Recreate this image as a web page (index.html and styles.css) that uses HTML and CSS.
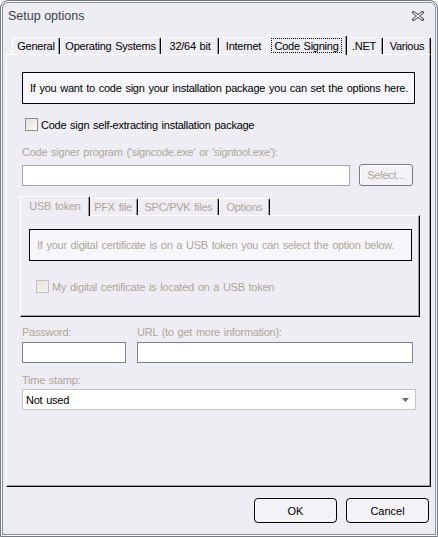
FILE: index.html
```html
<!DOCTYPE html>
<html>
<head>
<meta charset="utf-8">
<link rel="stylesheet" href="styles.css">
</head>
<body>
<div class="window">
  <div class="titlebar">
    <span class="title">Setup options</span>
    <svg class="close" width="12" height="10" viewBox="0 0 12 10">
      <path d="M1.5 1.5 L10.5 8.5 M10.5 1.5 L1.5 8.5" stroke="#5a5d63" stroke-width="3.2" stroke-linecap="square" fill="none"/>
      <path d="M1.5 1.5 L10.5 8.5 M10.5 1.5 L1.5 8.5" stroke="#eeedf3" stroke-width="1.1" stroke-linecap="butt" fill="none"/>
    </svg>
  </div>
  <div class="tabs">
    <div class="tab w-general">General</div>
    <div class="tab w-os">Operating Systems</div>
    <div class="tab w-bit">32/64 bit</div>
    <div class="tab w-internet">Internet</div>
    <div class="tab selected w-code"><span class="focus">Code Signing</span></div>
    <div class="tab w-net">.NET</div>
    <div class="tab w-various">Various</div>
  </div>
  <div class="panel">
    <div class="info">If you want to code sign your installation package you can set the options here.</div>
    <div class="check main-check"><span class="box"></span><span>Code sign self-extracting installation package</span></div>
    <div class="label dis signer-label">Code signer program ('signcode.exe' or 'signtool.exe'):</div>
    <div class="signer-row">
      <div class="input light signer-input"></div>
      <div class="btn select-btn dis">Select...</div>
    </div>
    <div class="subtabs">
      <div class="tab stab selected w-usb">USB token</div>
      <div class="tab stab w-pfx">PFX file</div>
      <div class="tab stab w-spc">SPC/PVK files</div>
      <div class="tab stab w-opt">Options</div>
    </div>
    <div class="subpanel">
      <div class="info sub-info dis">If your digital certificate is on a USB token you can select the option below.</div>
      <div class="check sub-check dis"><span class="box disbox"></span><span>My digital certificate is located on a USB token</span></div>
    </div>
    <div class="pair labels dis">
      <div>Password:</div>
      <div>URL (to get more information):</div>
    </div>
    <div class="pair inputs">
      <div class="input dark"></div>
      <div class="input dark"></div>
    </div>
    <div class="label dis ts-label">Time stamp:</div>
    <div class="dropdown">
      <span>Not used</span>
      <svg class="arrow" width="7" height="4" viewBox="0 0 7 4"><path d="M0 0 H7 L3.5 4 Z" fill="#6b6b6b"/></svg>
    </div>
  </div>
  <div class="buttons">
    <div class="btn big">OK</div>
    <div class="btn big">Cancel</div>
  </div>
</div>
</body>
</html>
```

FILE: styles.css
```css
* { box-sizing: border-box; }

body {
  margin: 0;
  background: #ffffff;
  font-family: "Liberation Sans", Arial, sans-serif;
  font-size: 11px;
  letter-spacing: -0.25px;
  word-spacing: 1px;
  color: #000;
}

.window {
  width: 438px;
  height: 537px;
  background: #eeedf3;
  border: 1px solid #737b84;
  border-radius: 8px 8px 0 0;
  box-shadow: inset 0 0 0 1px #fbfbfd, inset 0 0 0 2px #8b9199;
  padding: 0 6px 0 5px;
  display: flex;
  flex-direction: column;
}

.titlebar {
  height: 34px;
  display: flex;
  justify-content: space-between;
  align-items: flex-start;
  padding: 8px 7px 0 2px;
}

.title {
  font-size: 12.5px;
  line-height: 15px;
  letter-spacing: 0;
  word-spacing: 0;
  color: #3e3f4d;
}

.close { margin-top: 2px; }

.tabs {
  height: 19px;
  display: flex;
  align-items: flex-end;
  padding-left: 6px;
}

.tab {
  height: 17px;
  border-top: 1px solid #fff;
  border-left: 1px solid #fff;
  border-right: 1px solid #000;
  border-radius: 2px 2px 0 0;
  box-shadow: inset -1px 0 0 #a0a0a0;
  display: flex;
  align-items: center;
  justify-content: center;
  white-space: nowrap;
  line-height: 13px;
  flex: none;
}

.tab.selected {
  height: 20px;
  margin: 0 -2px -1px -2px;
  background: #eeedf3;
  position: relative;
  z-index: 1;
  padding-bottom: 1px;
}

.w-general { width: 48px; }
.w-os { width: 101px; }
.w-bit { width: 58px; }
.w-internet { width: 49px; }
.w-code { width: 81px; }
.w-net { width: 38px; }
.w-various { width: 48px; }

.focus {
  outline: 1px dotted #000;
  outline-offset: 0;
  padding: 1px 2px 0 2px;
  line-height: 12px;
}

.panel {
  height: 433px;
  border: 1px solid;
  border-color: #fff #000 #000 #fff;
  box-shadow: inset -1px -1px 0 #a0a0a0;
  padding: 17px 14px 0 15px;
  display: flex;
  flex-direction: column;
}

.info {
  height: 32px;
  border: 1px solid #000;
  background: #f6f6fb;
  display: flex;
  align-items: center;
  padding-left: 7px;
  white-space: nowrap;
  margin-right: 1px;
}

.dis { color: #aca899; }

.check {
  display: flex;
  align-items: center;
  height: 13px;
  white-space: nowrap;
}

.main-check { margin: 14px 0 0 3px; }

.box {
  width: 13px;
  height: 13px;
  border: 1px solid #8e8f91;
  background: linear-gradient(135deg, #dcdcd6 0%, #f0f0ec 60%, #ffffff 100%);
  margin-right: 3px;
  flex: none;
}

.disbox {
  border-color: #c4c2b8;
  background: linear-gradient(135deg, #e6e5e0 0%, #f3f3f0 100%);
}

.label {
  line-height: 13px;
  height: 13px;
  white-space: nowrap;
}

.signer-label { margin-top: 15px; }

.signer-row {
  margin-top: 5px;
  display: flex;
  align-items: center;
  gap: 9px;
  height: 22px;
}

.input {
  height: 21px;
  background: #fff;
  border: 1px solid #7d838a;
}

.input.light { border-color: #a3a7ac; }

.signer-input { width: 328px; }

.btn {
  border: 1px solid #000;
  border-radius: 4px;
  background: #f3f2f7;
  display: flex;
  align-items: center;
  justify-content: center;
  box-shadow: inset 1px 1px 0 #fff;
}

.select-btn {
  width: 54px;
  height: 22px;
  border-color: #7d7d80;
  border-radius: 3px;
}

.subtabs {
  margin-top: 10px;
  height: 19px;
  display: flex;
  align-items: flex-end;
  padding-left: 0;
}

.stab { color: #aca899; }

.w-usb { width: 70px; }
.w-pfx { width: 50px; }
.w-spc { width: 81px; }
.w-opt { width: 51px; }

.subpanel {
  height: 102px;
  margin: 0 -4px 0 -2px;
  border: 1px solid;
  border-color: #fff #000 #000 #fff;
  box-shadow: inset -1px -1px 0 #a0a0a0;
  padding: 13px 7px 0 8px;
  display: flex;
  flex-direction: column;
}

.sub-info { margin-right: 0; }

.sub-check { margin: 19px 0 0 7px; }

.pair {
  display: grid;
  grid-template-columns: 104px 276px;
  column-gap: 11px;
}

.labels {
  margin-top: 9px;
  line-height: 13px;
  white-space: nowrap;
}

.inputs { margin-top: 3px; }

.ts-label { margin-top: 11px; }

.dropdown {
  margin-top: 2px;
  height: 21px;
  background: #fff;
  border: 1px solid #c9c7ba;
  display: flex;
  align-items: center;
  justify-content: space-between;
  padding: 0 6px 0 3px;
}

.buttons {
  margin-top: 11px;
  display: flex;
  justify-content: flex-end;
  gap: 9px;
  padding-right: 2px;
}

.big {
  width: 83px;
  height: 25px;
  letter-spacing: 0;
}
```
